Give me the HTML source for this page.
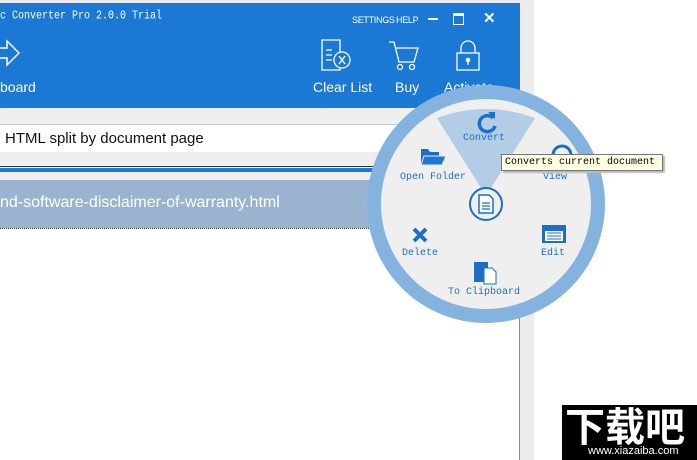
<!DOCTYPE html>
<html><head><style>
body{margin:0;width:697px;height:460px;overflow:hidden;background:#fff;position:relative;font-family:"Liberation Sans",sans-serif}
.a{position:absolute}
.mono{font-family:"Liberation Mono",monospace}
.lbl{position:absolute;font-family:"Liberation Mono",monospace;font-size:10px;color:#1b6fc7;white-space:nowrap}
</style></head><body>
<div class="a" style="left:0;top:0;width:534px;height:460px;background:#ececec"></div>
<div class="a" style="left:0;top:3px;width:519px;height:457px;background:#fff;border-right:1px solid #6b8fb8"></div>
<div class="a" style="left:0;top:3px;width:520px;height:105px;background:#1b78d4"></div>
<div class="a mono" style="left:0;top:10px;color:#fff;font-size:10px;transform:scaleY(1.2);transform-origin:top left">c Converter Pro 2.0.0 Trial</div>
<div class="a" style="left:352px;top:15px;color:#fff;font-size:9px;letter-spacing:-0.3px">SETTINGS</div>
<div class="a" style="left:396px;top:15px;color:#fff;font-size:9px;letter-spacing:-0.3px">HELP</div>
<div class="a" style="left:428px;top:18px;width:10px;height:2px;background:#fff"></div>
<div class="a" style="left:453px;top:13px;width:9px;height:8px;border:1.5px solid #fff;border-top-width:3px"></div>
<div class="a" style="left:483px;top:9px;color:#fff;font-size:15px;font-weight:bold">✕</div>
<svg class="a" style="left:0;top:38px" width="22" height="30"><path d="M0 10h7V3l12 12-12 12v-7H0" fill="none" stroke="#fff" stroke-width="1.5"/></svg>
<div class="a" style="left:0;top:79px;color:#fff;font-size:14px">board</div>
<svg class="a" style="left:320px;top:38px" width="36" height="36" fill="none" stroke="#fff" stroke-width="1.3"><path d="M2 2h18v30H2z M6 12h6M6 17h6M6 22h6"/><circle cx="22" cy="22" r="8" fill="#1b78d4"/><path d="M19 18l6 8M25 18l-6 8"/></svg>
<div class="a" style="left:313px;top:79px;color:#fff;font-size:14px">Clear List</div>
<svg class="a" style="left:386px;top:40px" width="36" height="32" fill="none" stroke="#fff" stroke-width="1.3"><path d="M3 2h5l5 20h15l4-14H10"/><circle cx="14" cy="27" r="2.5"/><circle cx="26" cy="27" r="2.5"/></svg>
<div class="a" style="left:395px;top:79px;color:#fff;font-size:14px">Buy</div>
<svg class="a" style="left:455px;top:40px" width="26" height="32" fill="none" stroke="#fff" stroke-width="1.3"><path d="M6 13V8a7 7 0 0114 0v5"/><rect x="2" y="13" width="22" height="17"/><circle cx="13" cy="20" r="1.6" fill="#fff"/><path d="M13 21v4"/></svg>
<div class="a" style="left:444px;top:79px;color:#fff;font-size:14px">Activate</div>
<div class="a" style="left:0;top:108px;width:519px;height:16px;background:#efefef"></div>
<div class="a" style="left:0;top:124px;width:519px;height:1px;background:#ccc"></div>
<div class="a" style="left:0;top:125px;width:519px;height:27px;background:#fff"></div>
<div class="a" style="left:5px;top:130px;font-size:15px;color:#111">HTML split by document page</div>
<div class="a" style="left:0;top:152px;width:519px;height:28px;background:#efefef"></div>
<div class="a" style="left:0;top:166px;width:519px;height:1px;background:#333"></div>
<div class="a" style="left:0;top:168px;width:519px;height:4px;background:#1b78d4"></div>
<div class="a" style="left:0;top:180px;width:519px;height:48px;background:#9ab4d0"></div>
<div class="a" style="left:0;top:194px;font-size:16px;color:#fff">nd-software-disclaimer-of-warranty.html</div>
<div class="a" style="left:0;top:228px;width:519px;border-top:1px dotted #333"></div>
<svg class="a" style="left:0;top:0" width="697" height="460">
<circle cx="486" cy="204" r="112" fill="#efefef" stroke="#85b3e0" stroke-width="14"/>
<path d="M486 196L437 118Q486 100 535 118Z" fill="#b3cde6"/>
<circle cx="486" cy="204" r="16" fill="#efefef" stroke="#1b6fc7" stroke-width="2"/>
<path d="M479 195h10l4 4v14h-14z" fill="#fff" stroke="#1b6fc7" stroke-width="1.5"/><path d="M482 203h8M482 206h8M482 209h8" stroke="#1b6fc7" stroke-width="1.3"/>
<path d="M493 118a8 8 0 1 0 2 8" fill="none" stroke="#1b6fc7" stroke-width="3.5"/><path d="M488 112l7 0 0 7z" fill="#1b6fc7"/>
<path d="M421 149h7l2 3h9v13h-18z" fill="#1b6fc7"/><path d="M424 156h22l-4 9h-21z" fill="#1b78d4" stroke="#efefef"/>
<path d="M414 229l12 12M426 229l-12 12" stroke="#1b6fc7" stroke-width="4"/>
<rect x="542" y="225" width="24" height="18" fill="#1b6fc7"/><rect x="545" y="231" width="18" height="10" fill="#fff"/><path d="M547 233h14M547 236h14M547 239h14" stroke="#1b6fc7"/>
<rect x="474" y="262" width="14" height="20" fill="#1b6fc7"/><path d="M484 268h8l4 4v12h-12z" fill="#fff" stroke="#1b6fc7"/>
<path d="M553 155a9 9 0 0 1 18 0" fill="none" stroke="#1b6fc7" stroke-width="3"/>
</svg>
<div class="lbl" style="left:463px;top:133px">Convert</div>
<div class="lbl" style="left:400px;top:172px">Open Folder</div>
<div class="lbl" style="left:543px;top:172px">View</div>
<div class="lbl" style="left:402px;top:248px">Delete</div>
<div class="lbl" style="left:541px;top:248px">Edit</div>
<div class="lbl" style="left:448px;top:287px">To Clipboard</div>
<div class="a mono" style="left:501px;top:154px;width:162px;height:17px;background:#ffffe1;border:1px solid #767676;box-shadow:2px 2px 1px #bbb;font-size:10px;line-height:15px;padding-left:3px;box-sizing:border-box;color:#000;white-space:nowrap">Converts current document</div>
<div class="a" style="left:562px;top:405px;width:135px;height:55px;background:#000"></div>
<div class="a" style="left:565px;top:401px;color:#fff;font-size:40px;font-weight:bold;font-family:'Noto Sans CJK SC',sans-serif;line-height:46px;letter-spacing:0px">下载吧</div>
<div class="a" style="left:588px;top:445px;color:#fff;font-size:11px">www.xiazaiba.com</div>
</body></html>
